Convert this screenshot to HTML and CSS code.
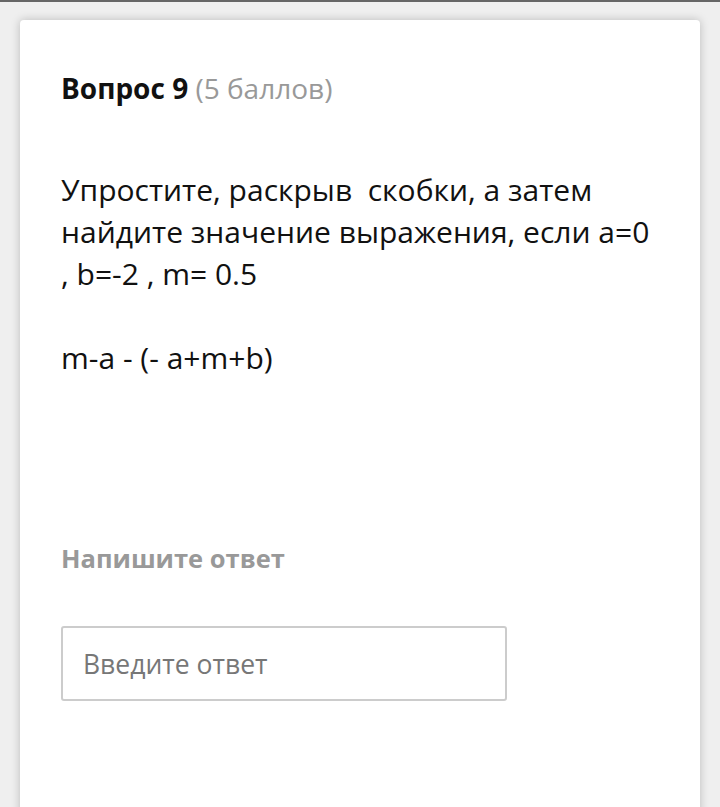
FILE: index.html
```html
<!DOCTYPE html>
<html lang="ru">
<head>
<meta charset="utf-8">
<link rel="stylesheet" href="styles.css">
</head>
<body>
<div class="topbar"></div>
<main class="card">
  <h2 class="title">Вопрос 9 <span class="points">(5 баллов)</span></h2>
  <div class="question">
    <p>Упростите, раскрыв&nbsp; скобки, а затем найдите значение выражения, если а=0 , b=-2 , m= 0.5</p>
    <p>m-a - (- a+m+b)</p>
  </div>
  <div class="answer-label">Напишите ответ</div>
  <div class="answer-box"><span class="placeholder">Введите ответ</span></div>
</main>
</body>
</html>
```
FILE: styles.css
```css
html, body {
  margin: 0;
  padding: 0;
}
body {
  background: #efefef;
  font-family: "Open Sans", "Noto Sans", sans-serif;
  height: 807px;
  overflow: hidden;
}
.topbar {
  height: 2px;
  background: #666;
}
.card {
  margin: 18px 20px 0;
  background: #fff;
  border-radius: 4px 4px 0 0;
  box-shadow: 0 0 10px rgba(0,0,0,0.22);
  padding: 50px 41px 0;
  height: 800px;
  box-sizing: border-box;
}
.title {
  margin: 0;
  font-size: 28px;
  font-weight: 700;
  color: #111;
  line-height: 36px;
}
.points {
  font-weight: 400;
  color: #999;
}
.question {
  margin-top: 63px;
  font-size: 30px;
  line-height: 42px;
  color: #111;
}
.question p {
  margin: 0 0 42px;
}
.answer-label {
  margin-top: 163px;
  font-size: 25.5px;
  font-weight: 700;
  color: #999;
  line-height: 32px;
}
.answer-box {
  margin-top: 52px;
  width: 446px;
  height: 75px;
  box-sizing: border-box;
  border: 2px solid #ccc;
  border-radius: 3px;
  display: flex;
  align-items: center;
  padding-left: 20px;
}
.placeholder {
  font-size: 26.5px;
  color: #777;
}
```
